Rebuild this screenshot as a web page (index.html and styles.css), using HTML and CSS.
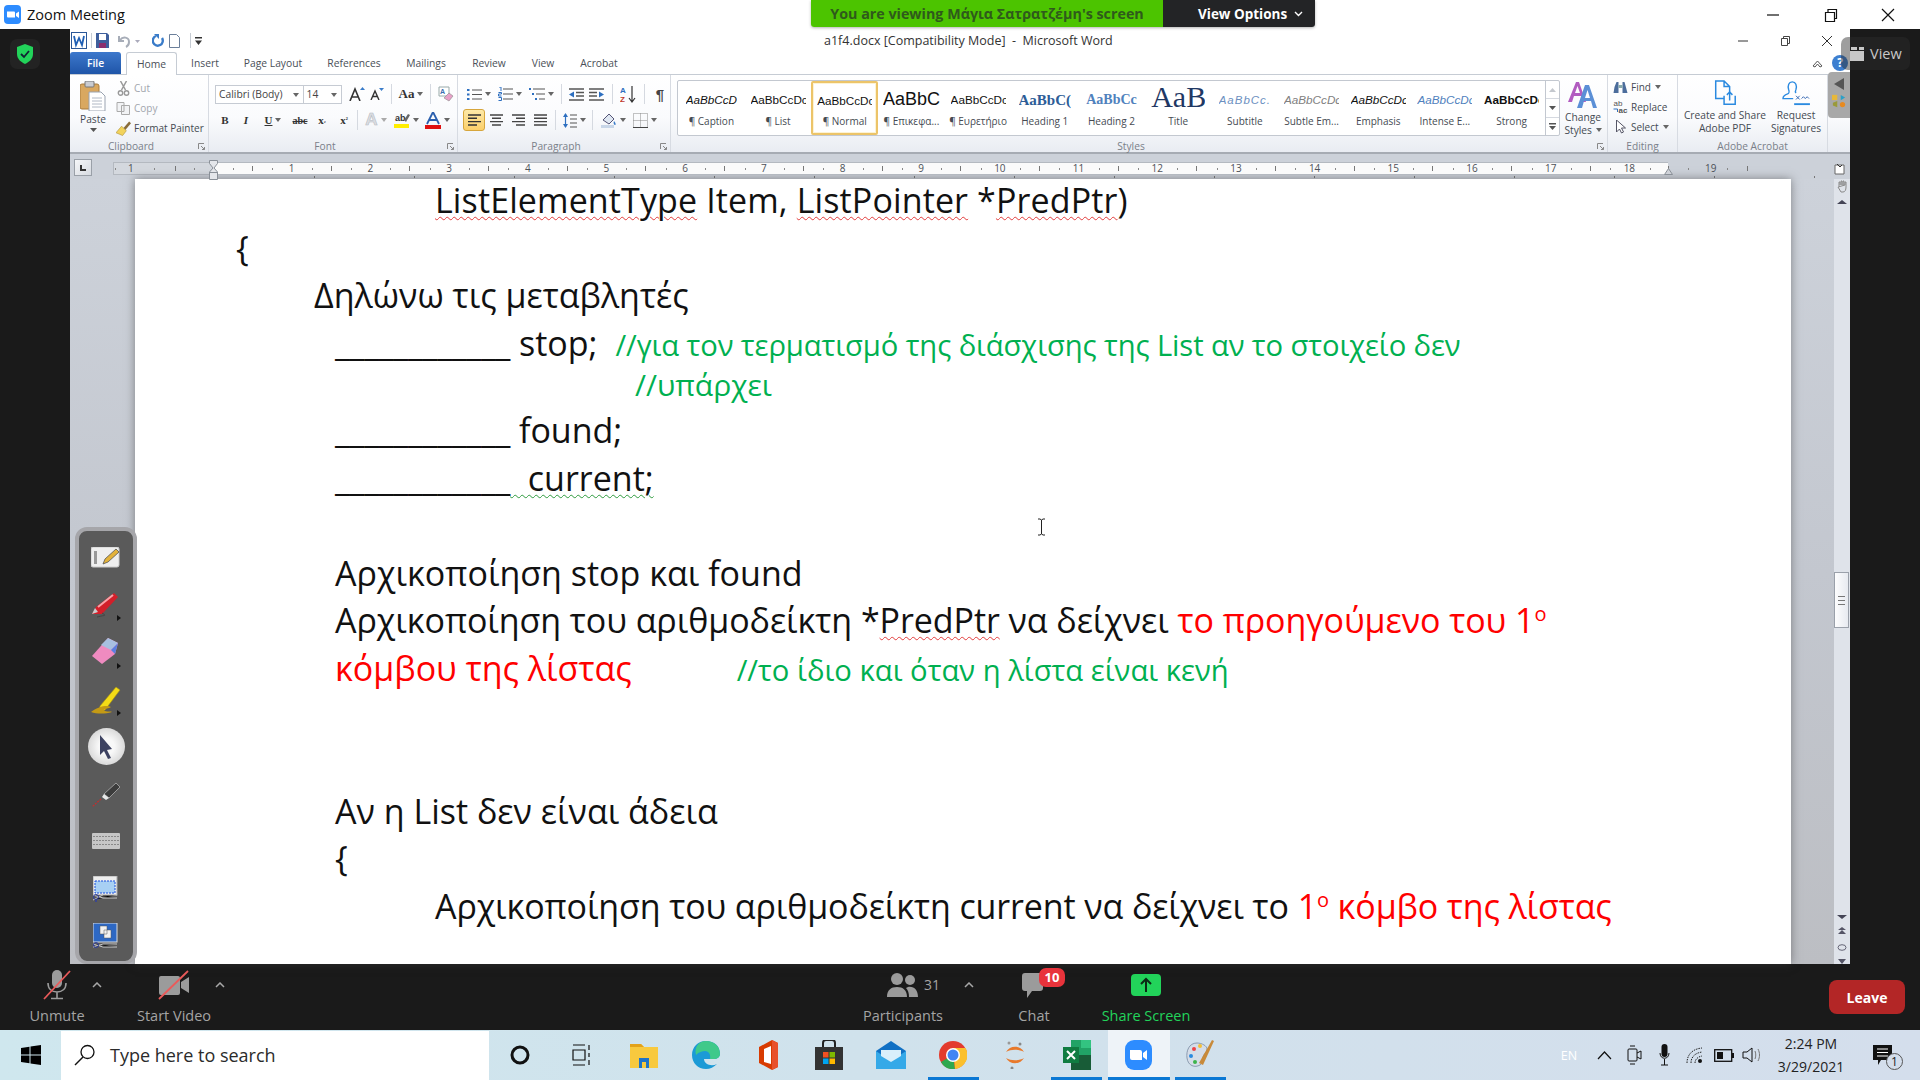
FILE: index.html
```html
<!DOCTYPE html>
<html lang="en">
<head>
  <meta charset="UTF-8">
  <title>Zoom Meeting</title>
  <link rel="stylesheet" href="styles.css">
</head>
<body>
  <header class="titlebar">
    <svg class="zoom-logo" width="17" height="19" viewBox="0 0 17 19"><rect width="17" height="19" rx="4" fill="#2d8cff"/><path d="M3 6.5h7a1 1 0 0 1 1 1v5H4a1 1 0 0 1-1-1zM12 8.5l3-2v6.500l-3-2z" fill="#fff"/></svg>
    <span class="titlebar-name">Zoom Meeting</span>
    <div class="banner">
      <span class="banner-msg">You are viewing Μάγια Σατρατζέμη's screen</span>
      <span class="banner-opt">View Options <svg width="9" height="6" viewBox="0 0 9 6"><path d="M1 1l3.500 3.500L8 1" fill="none" stroke="#fff" stroke-width="1.400"/></svg></span>
    </div>
    <div class="wincontrols">
      <svg width="58" height="16" viewBox="0 0 16 16"><path d="M3 8h12" stroke="#111" stroke-width="1.200"/></svg>
      <svg width="58" height="16" viewBox="0 0 16 16"><path d="M3.500 5.500h9v9h-9zM6 5.500V2.500h8.500v9h-2" fill="none" stroke="#111" stroke-width="1.200"/></svg>
      <svg width="58" height="16" viewBox="0 0 16 16"><path d="M2 2l12 12M14 2L2 14" stroke="#111" stroke-width="1.200"/></svg>
    </div>
  </header>

  <main class="stage">
    <aside class="side side-left">
      <div class="shield">
        <svg width="16" height="20" viewBox="0 0 16 20"><path d="M8 0l8 3v7c0 5-4 8-8 10-4-2-8-5-8-10V3z" fill="#22d35a"/><path d="M4 10l3 3 5-6" fill="none" stroke="#123" stroke-width="1.800"/></svg>
      </div>
    </aside>

    <section class="word">
      <div class="word-title">
        <div class="qat">
          <svg width="16" height="17" viewBox="0 0 16 17"><rect x=".5" y=".5" width="15" height="16" fill="#fff" stroke="#2b5797"/><path d="M3 4l2 9 3-7 3 7 2-9" fill="none" stroke="#1f5fb4" stroke-width="1.800"/></svg>
          <i class="qat-sep"></i>
          <svg width="13" height="15" viewBox="0 0 13 15"><path d="M0 0h11l2 2v13H0z" fill="#3f5f9c"/><rect x="3" y="1" width="7" height="6" fill="#fff"/><rect x="3" y="10" width="7" height="5" fill="#8c2f6e"/></svg>
          <svg class="qat-undo" width="24" height="14" viewBox="0 0 24 14"><path d="M2 2v5h5M3 6c3-4 9-3 9 2 0 2-1 4-3 5" fill="none" stroke="#a7adb8" stroke-width="2"/><path d="M18 6h5l-2.500 3z" fill="#aab"/></svg>
          <svg class="qat-repeat" width="13" height="14" viewBox="0 0 13 14"><path d="M4 2a5 5 0 1 0 6 2" fill="none" stroke="#3a7cc9" stroke-width="2.400"/><path d="M2 0h5v5z" fill="#3a7cc9"/></svg>
          <svg width="11" height="14" viewBox="0 0 11 14"><path d="M.5.500h7l3 3v10H.5z" fill="#fff" stroke="#6b7f9a"/></svg>
          <i class="qat-sep qat-sep-end"></i>
          <svg width="7" height="8" viewBox="0 0 7 8"><path d="M0 0h7v1.500H0zM0 3.500h7L3.500 8z" fill="#333"/></svg>
        </div>
        <span class="doc-title">a1f4.docx [Compatibility Mode] &nbsp;- &nbsp;Microsoft Word</span>
        <div class="word-controls">
          <svg width="42" height="12" viewBox="0 0 12 12"><path d="M1 6h10" stroke="#333"/></svg>
          <svg width="42" height="12" viewBox="0 0 12 12"><path d="M2.500 3.500h6v7h-6zM4.500 3.500v-2h6v7h-2" fill="none" stroke="#444"/></svg>
          <svg width="42" height="12" viewBox="0 0 12 12"><path d="M1 1l10 10M11 1L1 11" stroke="#333"/></svg>
        </div>
      </div>

      <nav class="tabs">
        <span class="tab tab-file">File</span>
        <span class="tab tab-home">Home</span>
        <span class="tab t56">Insert</span>
        <span class="tab t80">Page Layout</span>
        <span class="tab t82">References</span>
        <span class="tab t62">Mailings</span>
        <span class="tab t64">Review</span>
        <span class="tab t44">View</span>
        <span class="tab t68">Acrobat</span>
        <div class="tabs-help">
          <svg width="11" height="9" viewBox="0 0 11 9"><path d="M1 7l4.500-5L10 7 8 8 5.500 5 3 8z" fill="#fff" stroke="#555"/></svg>
          <svg width="16" height="16" viewBox="0 0 16 16"><circle cx="8" cy="8" r="8" fill="#3d7fd0"/><text x="8" y="12" class="help-mark">?</text></svg>
        </div>
      </nav>

      <div class="ribbon">
        <div class="group g-clipboard">
          <div class="group-body clip-body">
            <div class="paste">
              <svg width="26" height="30" viewBox="0 0 26 30"><rect y="3" width="19" height="25" rx="2" fill="#d9a860" stroke="#a87b3c"/><rect x="5" width="9" height="6" rx="1" fill="#c9ccd2" stroke="#777"/><path d="M9 11h12l4 4v15H9z" fill="#fff" stroke="#9aa3b0"/><path d="M12 17h10M12 20h10M12 23h10M12 26h10" stroke="#b0b8c4"/></svg>
              <span>Paste</span>
              <svg width="7" height="4" viewBox="0 0 7 4"><path d="M0 0h7L3.500 4z" fill="#555"/></svg>
            </div>
            <ul class="clip-list">
              <li class="muted"><svg width="12" height="15" viewBox="0 0 12 15"><path d="M3 0l5 9M9 0L4 9" stroke="#999" stroke-width="1.500"/><circle cx="3" cy="12" r="2.200" fill="none" stroke="#999" stroke-width="1.400"/><circle cx="9" cy="12" r="2.200" fill="none" stroke="#999" stroke-width="1.400"/></svg>Cut</li>
              <li class="muted"><svg width="14" height="13" viewBox="0 0 14 13"><path d="M.5.500h7v9h-7zM5 3.500h8v9H5z" fill="#f2f3f5" stroke="#aaa"/></svg>Copy</li>
              <li><svg width="16" height="15" viewBox="0 0 16 15"><path d="M8 7l6-7 2 2-6 7z" fill="#8a6d3b"/><path d="M0 12l6-7 5 5-4 5z" fill="#f2d35c" stroke="#a98a2a" stroke-width=".6"/></svg>Format Painter</li>
            </ul>
          </div>
          <div class="group-label has-launcher">Clipboard<svg class="launcher" width="7" height="7" viewBox="0 0 7 7"><path d="M.5 6V.5H6M3 3l3.500 3.500M4 6.500h2.500V4" fill="none" stroke="#888"/></svg></div>
        </div>

        <div class="group g-font">
          <div class="group-body font-body">
            <div class="tool-row">
              <span class="combo combo-font">Calibri (Body)<b class="caret"></b></span>
              <span class="combo combo-size">14<b class="caret"></b></span>
              <span class="tool w20 mg-l1"><svg width="16" height="14" viewBox="0 0 16 14"><path d="M1 14L6 2l5 12M3 10h6" fill="none" stroke="#333" stroke-width="1.600"/><path d="M11 3l2.500-3L16 3z" fill="#3a7cc9"/></svg></span>
              <span class="tool w20"><svg width="14" height="12" viewBox="0 0 14 12"><path d="M1 12l4-9 4 9M3 8.500h4" fill="none" stroke="#333" stroke-width="1.400"/><path d="M9 0h5l-2.500 3z" fill="#3a7cc9"/></svg></span>
              <i class="sep"></i>
              <span class="tool w30"><span class="aa">Aa</span><b class="caret"></b></span>
              <i class="sep"></i>
              <span class="tool w22"><svg width="16" height="16" viewBox="0 0 16 16"><path d="M1 1h10v9H1z" fill="#fff" stroke="#9aa"/><text x="2" y="8" class="mini-a">A</text><path d="M6 12l5-5 4 3-4 5z" fill="#e8a0c8" stroke="#888" stroke-width=".6"/></svg></span>
            </div>
            <div class="tool-row row-two">
              <span class="tool w20 fmt fmt-b">B</span>
              <span class="tool w22 fmt fmt-i">I</span>
              <span class="tool w32 fmt fmt-u"><u>U</u><b class="caret"></b></span>
              <span class="tool w22 fmt fmt-s"><s>abc</s></span>
              <span class="tool w22 fmt fmt-b">x<sub>₂</sub></span>
              <span class="tool w22 fmt fmt-b">x<sup>²</sup></span>
              <i class="sep sep-tight"></i>
              <span class="tool w30"><span class="fx-a">A</span><b class="caret caret-faint"></b></span>
              <span class="tool w30"><svg width="16" height="16" viewBox="0 0 16 16"><text x="1" y="9" class="mini-ab">ab</text><path d="M10 8l4-6 2 1-4 7z" fill="#666"/><rect y="12" width="15" height="4" fill="#ffee00"/></svg><b class="caret"></b></span>
              <span class="tool w32"><svg width="16" height="17" viewBox="0 0 16 17"><path d="M2 12L8 0l6 12M4.500 8h7" fill="none" stroke="#2a5fae" stroke-width="1.800"/><rect y="13" width="16" height="4" fill="#e01010"/></svg><b class="caret"></b></span>
            </div>
          </div>
          <div class="group-label has-launcher">Font<svg class="launcher" width="7" height="7" viewBox="0 0 7 7"><path d="M.5 6V.5H6M3 3l3.500 3.500M4 6.500h2.500V4" fill="none" stroke="#888"/></svg></div>
        </div>

        <div class="group g-para">
          <div class="group-body para-body">
            <div class="tool-row">
              <span class="tool w32"><svg width="15" height="13" viewBox="0 0 15 13"><path d="M5 2h10M5 6.500h10M5 11h10" stroke="#555" stroke-width="1.200"/><path d="M0 1h2.500v2H0zM0 5.500h2.500v2H0zM0 10h2.500v2H0z" fill="#2d6fc0"/></svg><b class="caret"></b></span>
              <span class="tool w30"><svg width="15" height="14" viewBox="0 0 15 14"><path d="M5 2h10M5 7h10M5 12h10" stroke="#555" stroke-width="1.200"/><path d="M1 0h2v4M.5 5.500h3v1.500h-3v2h3M.5 10.500h3v3h-3" fill="none" stroke="#2d6fc0"/></svg><b class="caret"></b></span>
              <span class="tool w32"><svg width="16" height="14" viewBox="0 0 16 14"><path d="M4 2h12M7 7h9M10 12h6" stroke="#555" stroke-width="1.200"/><path d="M0 1h2v2H0zM3 6h2v2H3zM6 11h2v2H6z" fill="#2d6fc0"/></svg><b class="caret"></b></span>
              <i class="sep"></i>
              <span class="tool w20"><svg width="15" height="13" viewBox="0 0 15 13"><path d="M0 1h15M7 4.500h8M7 8h8M0 12h15" stroke="#555" stroke-width="1.300"/><path d="M5 3.500v6L0 6.500z" fill="#2d6fc0"/></svg></span>
              <span class="tool w20"><svg width="15" height="13" viewBox="0 0 15 13"><path d="M0 1h15M0 4.500h8M0 8h8M0 12h15" stroke="#555" stroke-width="1.300"/><path d="M10 3.500v6l5-3z" fill="#2d6fc0"/></svg></span>
              <i class="sep sep-wide"></i>
              <span class="tool w20"><svg width="16" height="17" viewBox="0 0 16 17"><text x="0" y="7" class="mini-az">A</text><text x="0" y="16" class="mini-za">Z</text><path d="M12 0v15M9 12l3 4 3-4" fill="none" stroke="#333" stroke-width="1.200"/></svg></span>
              <i class="sep sep-wide"></i>
              <span class="tool w20 pilcrow">¶</span>
            </div>
            <div class="tool-row row-two">
              <span class="tool w22 tool-on"><svg width="13" height="12" viewBox="0 0 13 12"><path d="M0 1h13M0 4.300h9M0 7.600h13M0 11h9" stroke="#333" stroke-width="1.400"/></svg></span>
              <span class="tool w22"><svg width="13" height="12" viewBox="0 0 13 12"><path d="M0 1h13M2 4.300h9M0 7.600h13M2 11h9" stroke="#444" stroke-width="1.400"/></svg></span>
              <span class="tool w22"><svg width="13" height="12" viewBox="0 0 13 12"><path d="M0 1h13M4 4.300h9M0 7.600h13M4 11h9" stroke="#444" stroke-width="1.400"/></svg></span>
              <span class="tool w22"><svg width="13" height="12" viewBox="0 0 13 12"><path d="M0 1h13M0 4.300h13M0 7.600h13M0 11h13" stroke="#444" stroke-width="1.400"/></svg></span>
              <i class="sep"></i>
              <span class="tool w28"><svg width="14" height="15" viewBox="0 0 14 15"><path d="M7 2h7M7 6h7M7 10h7M7 14h7" stroke="#555" stroke-width="1.200"/><path d="M2.500 1v13" stroke="#2d6fc0" stroke-width="1.200"/><path d="M0 4l2.500-4L5 4zM0 11l2.500 4L5 11z" fill="#2d6fc0"/></svg><b class="caret"></b></span>
              <i class="sep"></i>
              <span class="tool w32"><svg width="16" height="16" viewBox="0 0 16 16"><path d="M2 8l6-6 5 5-5 5z" fill="#dfe7f2" stroke="#557"/><path d="M13 9c2 2 2 4 1 4s-2-2-1-4z" fill="#3a7cc9"/><rect y="13" width="13" height="3" fill="#c8d6e8"/></svg><b class="caret"></b></span>
              <span class="tool w32"><svg width="15" height="15" viewBox="0 0 15 15"><path d="M.5.500h14v14H.5zM7.500.5v14M.5 7.500h14" fill="none" stroke="#888" stroke-dasharray="1 1"/><path d="M0 14.500h15" stroke="#444"/></svg><b class="caret"></b></span>
            </div>
          </div>
          <div class="group-label has-launcher">Paragraph<svg class="launcher" width="7" height="7" viewBox="0 0 7 7"><path d="M.5 6V.5H6M3 3l3.500 3.500M4 6.500h2.500V4" fill="none" stroke="#888"/></svg></div>
        </div>

        <div class="group g-styles">
          <div class="group-body styles-body">
            <div class="gallery">
              <div class="style-list">
                <div class="style-item"><span class="sample s-ital">AaBbCcD</span><span class="style-name">¶ Caption</span></div>
                <div class="style-item"><span class="sample">AaBbCcDc</span><span class="style-name">¶ List</span></div>
                <div class="style-item style-on"><span class="sample">AaBbCcDc</span><span class="style-name">¶ Normal</span></div>
                <div class="style-item"><span class="sample s-big">AaBbC</span><span class="style-name">¶ Επικεφα...</span></div>
                <div class="style-item"><span class="sample">AaBbCcDc</span><span class="style-name">¶ Ευρετήριο</span></div>
                <div class="style-item"><span class="sample s-h1">AaBbC(</span><span class="style-name">Heading 1</span></div>
                <div class="style-item"><span class="sample s-h2">AaBbCc</span><span class="style-name">Heading 2</span></div>
                <div class="style-item"><span class="sample s-title">AaB</span><span class="style-name">Title</span></div>
                <div class="style-item"><span class="sample s-sub">AaBbCc.</span><span class="style-name">Subtitle</span></div>
                <div class="style-item"><span class="sample s-subtle">AaBbCcDc</span><span class="style-name">Subtle Em...</span></div>
                <div class="style-item"><span class="sample s-ital">AaBbCcDc</span><span class="style-name">Emphasis</span></div>
                <div class="style-item"><span class="sample s-intense">AaBbCcDc</span><span class="style-name">Intense E...</span></div>
                <div class="style-item"><span class="sample s-strong">AaBbCcDc</span><span class="style-name">Strong</span></div>
              </div>
              <div class="gallery-arrows">
                <span><svg width="7" height="4" viewBox="0 0 7 4"><path d="M0 4h7L3.500 0z" fill="#c4c8ce"/></svg></span>
                <span><svg width="7" height="4" viewBox="0 0 7 4"><path d="M0 0h7L3.500 4z" fill="#555"/></svg></span>
                <span><svg width="7" height="7" viewBox="0 0 7 7"><path d="M0 0h7v1.500H0zM0 3h7L3.500 7z" fill="#555"/></svg></span>
              </div>
            </div>
            <div class="big-tool change-styles">
              <svg width="30" height="28" viewBox="0 0 30 28"><path d="M0 22L8 2h3l7 20h-3l-2-6H6l-2 6zM7 13h5L9.500 6z" fill="#b25cc0"/><path d="M9 28L17 5h4l8 23h-4l-2-7h-7l-2 7zM17 18h5l-2.500-8z" fill="#5b8fd6"/></svg>
              <span>Change</span>
              <span>Styles <b class="caret caret-inline"></b></span>
            </div>
          </div>
          <div class="group-label has-launcher">Styles<svg class="launcher" width="7" height="7" viewBox="0 0 7 7"><path d="M.5 6V.5H6M3 3l3.500 3.500M4 6.500h2.500V4" fill="none" stroke="#888"/></svg></div>
        </div>

        <div class="group g-edit">
          <div class="group-body">
            <ul class="clip-list edit-list">
              <li><svg width="14" height="13" viewBox="0 0 14 13"><path d="M1 6l2-5h2v11H0zM9 1h2l3 11H9z" fill="#4c6d9c"/><rect x="5" y="4" width="4" height="3" fill="#8aa"/></svg>Find <b class="caret caret-inline"></b></li>
              <li><svg width="14" height="14" viewBox="0 0 14 14"><text x="0" y="6" class="mini-rp">ab</text><text x="5" y="13" class="mini-rp mini-rp2">ac</text><path d="M0 9h4v3" fill="none" stroke="#2d6fc0"/></svg>Replace</li>
              <li><svg width="14" height="14" viewBox="0 0 14 14"><path d="M3 0v12l3-3 2 4 2-1-2-4h4z" fill="#fff" stroke="#556"/></svg>Select <b class="caret caret-inline"></b></li>
            </ul>
          </div>
          <div class="group-label">Editing</div>
        </div>

        <div class="group g-acrobat">
          <div class="group-body acrobat-body">
            <div class="big-tool acro-tool">
              <svg width="24" height="26" viewBox="0 0 24 28"><path d="M11 20H2V1h9l6 6v6M11 1v6h6" fill="none" stroke="#2a8ae0" stroke-width="1.600"/><path d="M11 17v9h12v-9M17 22v-9M14 16l3-3 3 3" fill="none" stroke="#2a8ae0" stroke-width="1.600"/></svg>
              <span>Create and Share</span>
              <span>Adobe PDF</span>
            </div>
            <div class="big-tool acro-tool">
              <svg width="30" height="26" viewBox="0 0 30 28"><path d="M11 2c-4 0-5 4-4 8 1 3 1 4-1 5-3 1-5 3-5 5h11M11 2c4 0 5 4 4 8-1 2-1 3 0 4" fill="none" stroke="#2a8ae0" stroke-width="1.500"/><path d="M15 17l4 4M19 17l-4 4M21 20l2-2 2 2 2-2 2 2" fill="none" stroke="#2a5fae"/><path d="M13 26h17" stroke="#2a8ae0" stroke-width="2"/></svg>
              <span>Request</span>
              <span>Signatures</span>
            </div>
          </div>
          <div class="group-label">Adobe Acrobat</div>
        </div>

        <div class="ext-slot">
          <div class="ext-tab">
            <svg width="10" height="12" viewBox="0 0 10 12"><path d="M10 0v12L0 6z" fill="#555"/></svg>
            <svg width="16" height="14" viewBox="0 0 16 16"><rect y="1" width="6" height="6" fill="#e8b83a"/><path d="M10 1l5 3-5 3z" fill="#2aa0c8"/><path d="M1 10l5-2v7l-5-2z" fill="#9a9a3a"/><circle cx="12" cy="12" r="3" fill="#e88a20"/></svg>
          </div>
        </div>
      </div>

      <div class="ruler">
        <div class="ruler-corner"><span></span></div>
        <div class="ruler-strip">
          <div class="ruler-margin"><span>1</span></div>
          <div class="ruler-body">
            <svg class="indent-mark" width="9" height="20" viewBox="0 0 9 20"><path d="M.5.500h8v3L5 8l3.500 4v7.500h-8V12L4 8 .5 3.500z" fill="#e4e6ea" stroke="#8a9098"/><path d="M.5 12.500h8" stroke="#8a9098"/></svg>
            <svg class="right-mark" width="9" height="7" viewBox="0 0 9 7"><path d="M.5 6.500L4.500.5l4 6z" fill="#cfd2d8" stroke="#8a9098"/></svg>
            <span>1</span><span>2</span><span>3</span><span>4</span><span>5</span><span>6</span><span>7</span><span>8</span><span>9</span><span>10</span><span>11</span><span>12</span><span>13</span><span>14</span><span>15</span><span>16</span><span>17</span><span>18</span>
          </div>
          <div class="ruler-tail"><span>19</span></div>
        </div>
        <div class="ruler-view"><svg width="14" height="13" viewBox="0 0 14 13"><path d="M1 2h9v9H1z" fill="#fff" stroke="#666"/><path d="M3 1l3 3 2-2" fill="none" stroke="#333"/></svg></div>
      </div>

      <div class="docarea">
        <div class="gutter"></div>
        <article class="page">
          <p class="line ind-3 line-first loose"><span class="sq">ListElementType</span> Item, <span class="sq">ListPointer</span> *<span class="sq">PredPtr</span>)</p>
          <p class="line ind-0">{</p>
          <p class="line ind-1">Δηλώνω τις μεταβλητές</p>
          <p class="line ind-2"><span class="blank">____________</span> stop;<span class="note note-a">//για τον τερματισμό της διάσχισης της List αν το στοιχείο δεν</span></p>
          <p class="line line-short ind-4"><span class="note note-c">//υπάρχει</span></p>
          <p class="line ind-2"><span class="blank">____________</span> found;</p>
          <p class="line ind-2"><span class="blank">____________</span><span class="gsq">  current;</span></p>
          <p class="line"></p>
          <p class="line ind-2">Αρχικοποίηση stop και found</p>
          <p class="line ind-2 tight"><span>Αρχικοποίηση του αριθμοδείκτη *</span><span class="sq">PredPtr</span> να δείχνει <span class="red">το προηγούμενο του 1<sup class="ord">ο</sup></span></p>
          <p class="line ind-2"><span class="red">κόμβου της λίστας</span><span class="note note-b">//το ίδιο και όταν η λίστα είναι κενή</span></p>
          <p class="line"></p>
          <p class="line"></p>
          <p class="line ind-2">Αν η List δεν είναι άδεια</p>
          <p class="line ind-2">{</p>
          <p class="line ind-3 tighter">Αρχικοποίηση του αριθμοδείκτη current να δείχνει το <span class="red">1<sup class="ord">ο</sup> κόμβο της λίστας</span></p>
        </article>
        <div class="gutter gutter-right"></div>
        <div class="vscroll">
          <svg width="13" height="14" viewBox="0 0 13 14"><path d="M3 7V3h1v3M5 6V2h1v4M7 6V2h1v4M9 6V3h1v5c0 3-1 5-3 5H5L2 8z" fill="none" stroke="#888"/></svg>
          <svg class="vs-up" width="10" height="4" viewBox="0 0 10 4"><path d="M0 4h10L5 0z" fill="#445"/></svg>
          <div class="vs-track"><div class="vs-thumb"><i></i></div></div>
          <svg width="10" height="4" viewBox="0 0 10 4"><path d="M0 0h10L5 4z" fill="#445"/></svg>
          <svg class="vs-prev" width="8" height="7" viewBox="0 0 8 7"><path d="M0 7h8L4 3zM0 3h8L4 0z" fill="#556"/></svg>
          <svg class="vs-oval" width="10" height="7" viewBox="0 0 10 7"><ellipse cx="5" cy="3.500" rx="4" ry="2.800" fill="none" stroke="#667"/></svg>
          <svg class="vs-next" width="8" height="5" viewBox="0 0 8 5"><path d="M0 0h8L4 5z" fill="#556"/></svg>
        </div>
      </div>
    </section>

    <aside class="side"></aside>

    <div class="view-btn">
      <svg width="14" height="14" viewBox="6 0 14 14"><path d="M0 4h20v10H0zM0 0h5v3H0zM7 0h6v3H7zM15 0h5v3h-5z" fill="#c8c8c8"/></svg>
      <span>View</span>
    </div>

    <div class="annotate">
      <span class="annot-slot"><svg width="30" height="22" viewBox="0 0 30 22"><rect width="28" height="20" rx="2" fill="#efefef" stroke="#ccc"/><rect x="3" y="4" width="3" height="13" fill="#999"/><path d="M12 17l2-5 11-10 3 3-11 10z" fill="#e3b23a" stroke="#555" stroke-width=".8"/></svg></span>
      <span class="annot-slot has-tri"><svg width="30" height="28" viewBox="0 0 30 28"><path d="M1 23l4-7 18-14 4 4-16 17z" fill="#d31f2a"/><path d="M7 16l15-12" stroke="#f6a3a8" stroke-width="2"/><path d="M1 23l6-2-3-4z" fill="#ccc"/><path d="M6 26c8-2 10-1 5-4" fill="none" stroke="#444"/></svg></span>
      <span class="annot-slot has-tri"><svg width="30" height="30" viewBox="0 0 30 30"><path d="M1 19L17 1l10 5-3 11-13 10z" fill="#ef8bc0"/><path d="M17 1l10 5-7 7-10-5z" fill="#a8c0e0"/><path d="M20 13l7-7-3 11z" fill="#5a7fe0"/></svg></span>
      <span class="annot-slot has-tri"><svg width="32" height="30" viewBox="0 0 32 30"><path d="M10 21l16-19 4 3-15 20-6 1z" fill="#f4dc16" stroke="#a58e10" stroke-width=".6"/><path d="M1 27c8-6 16-7 20-5-3 2-10 2-6 4 3 1 6 0 7 1-7 2-15 2-21 0z" fill="#c49a14"/></svg></span>
      <span class="annot-slot"><span class="annot-pointer"><svg width="16" height="24" viewBox="0 0 16 24"><path d="M2 0l12 14-5 1 4 8-3 1-4-8-4 4z" fill="#3d4261"/></svg></span></span>
      <span class="annot-slot"><svg width="30" height="28" viewBox="0 0 30 28"><path d="M13 14l12-11 4 4-11 11z" fill="#3c3c3c" stroke="#bbb" stroke-width=".7"/><path d="M13 14l5 4-3 2-4-3z" fill="#e8e8e8"/><path d="M10 19L1 27" stroke="#c03030" stroke-width="1.200" stroke-dasharray="2 1"/></svg></span>
      <span class="annot-slot"><svg width="28" height="16" viewBox="0 0 28 16"><rect width="28" height="16" rx="1" fill="#c6c6c6"/><path d="M1 3.500h26M1 7.500h26M1 11.500h26" stroke="#888" stroke-dasharray="2 1"/></svg></span>
      <span class="annot-slot"><svg width="26" height="26" viewBox="0 0 26 26"><rect width="24" height="19" fill="#eee" stroke="#aaa"/><rect x="2" y="5" width="20" height="12" fill="#a8d0f4" stroke="#1b4fdc" stroke-dasharray="2 1"/><path d="M0 24l10-5h14M0 19l10 3h14" stroke="#ccc"/><circle cx="3" cy="21" r="2.500" fill="none" stroke="#3040a0"/><circle cx="3" cy="25" r="1" fill="#3040a0"/></svg></span>
      <span class="annot-slot"><svg width="26" height="26" viewBox="0 0 26 26"><rect width="24" height="19" fill="#2d68c4" stroke="#ddd"/><path d="M7 3h7v8H7zM11 7h7v8h-7z" fill="#f2f2f2" stroke="#555" stroke-width=".5"/><path d="M0 24l10-3h14M0 21l10 3h14" stroke="#ccc"/><circle cx="3" cy="22" r="2.500" fill="none" stroke="#3040a0"/></svg></span>
    </div>

    <svg class="ibeam" width="9" height="18" viewBox="0 0 9 18"><path d="M1 1h2l1.500 1L6 1h2M4.500 2v14M1 17h2l1.500-1L6 17h2" fill="none" stroke="#222"/></svg>
  </main>

  <footer class="meeting-bar">
    <div class="mb-item mb-unmute">
      <div class="mb-icon">
        <svg width="30" height="30" viewBox="0 0 30 30"><rect x="10" y="0" width="10" height="18" rx="5" fill="#9b9b9b"/><path d="M6 13c0 6 4 9 9 9s9-3 9-9M15 22v6M9 28.500h12" fill="none" stroke="#9b9b9b" stroke-width="1.600"/><path d="M2 29L28 1" stroke="#ea5a5a" stroke-width="1.800"/></svg>
        <svg class="chev" width="10" height="6" viewBox="0 0 10 6"><path d="M1 5l4-4 4 4" fill="none" stroke="#a8a8a8" stroke-width="1.500"/></svg>
      </div>
      <span>Unmute</span>
    </div>
    <div class="mb-item mb-video">
      <div class="mb-icon">
        <svg width="32" height="30" viewBox="0 0 32 30"><path d="M3 6h17a2 2 0 0 1 2 2v15a2 2 0 0 1-2 2H3a2 2 0 0 1-2-2V8a2 2 0 0 1 2-2zM23 12l8-5v16l-8-5z" fill="#9b9b9b"/><path d="M1 29L30 1" stroke="#ea5a5a" stroke-width="1.800"/></svg>
        <svg class="chev" width="10" height="6" viewBox="0 0 10 6"><path d="M1 5l4-4 4 4" fill="none" stroke="#a8a8a8" stroke-width="1.500"/></svg>
      </div>
      <span>Start Video</span>
    </div>
    <div class="mb-item mb-people">
      <div class="mb-icon">
        <svg width="32" height="24" viewBox="0 0 32 24"><circle cx="10" cy="6" r="6" fill="#9b9b9b"/><circle cx="23" cy="7" r="5" fill="#9b9b9b"/><path d="M0 24c0-7 4-10 10-10s10 3 10 10zM21 14c6-1 10 3 10 10h-9c0-4-1-7-3-9z" fill="#9b9b9b"/></svg>
        <span class="count">31</span>
        <svg class="chev" width="10" height="6" viewBox="0 0 10 6"><path d="M1 5l4-4 4 4" fill="none" stroke="#a8a8a8" stroke-width="1.500"/></svg>
      </div>
      <span>Participants</span>
    </div>
    <div class="mb-item mb-chat">
      <div class="mb-icon">
        <svg width="26" height="28" viewBox="0 0 26 28"><path d="M4 2h15a3 3 0 0 1 3 3v12a3 3 0 0 1-3 3h-8l-5 7v-7H4a3 3 0 0 1-3-3V5a3 3 0 0 1 3-3z" fill="#9b9b9b"/></svg>
        <b class="badge">10</b>
      </div>
      <span>Chat</span>
    </div>
    <div class="mb-item mb-share">
      <div class="mb-icon">
        <svg width="30" height="22" viewBox="0 0 30 22"><rect width="30" height="22" rx="4" fill="#22d35a"/><path d="M15 18V6M10 10l5-5 5 5" fill="none" stroke="#0b2a14" stroke-width="2"/></svg>
      </div>
      <span>Share Screen</span>
    </div>
    <button class="leave">Leave</button>
  </footer>

  <footer class="taskbar">
    <div class="start"><svg width="20" height="20" viewBox="0 0 20 20"><path d="M0 3l8.500-1.300v7.800H0zM9.500 1.500L20 0v9.500H9.500zM0 10.500h8.500v7.800L0 17zM9.500 10.500H20V20L9.500 18.500z" fill="#000"/></svg></div>
    <div class="search">
      <svg width="22" height="22" viewBox="0 0 22 22"><circle cx="13.500" cy="8" r="6.500" fill="none" stroke="#111" stroke-width="1.300"/><path d="M9 13l-8 8" stroke="#111" stroke-width="1.500"/></svg>
      <span>Type here to search</span>
    </div>
    <div class="task-icons">
      <span class="task"><svg width="20" height="20" viewBox="0 0 20 20"><circle cx="10" cy="10" r="8" fill="none" stroke="#111" stroke-width="3"/></svg></span>
      <span class="task"><svg width="20" height="22" viewBox="0 0 20 22"><path d="M1 1h12M1 21h12M1 6h12v10H1zM17 1v5M17 9v4M17 16v5" fill="none" stroke="#111" stroke-width="1.200"/></svg></span>
      <span class="task"><svg width="28" height="26" viewBox="0 0 28 26"><path d="M0 2h11l3 3h14v21H0z" fill="#f8c93e"/><path d="M0 2h11l3 3H0z" fill="#e3a21a"/><path d="M9 26v-10h10v10h-3v-6h-4v6z" fill="#1f74c8"/></svg></span>
      <span class="task"><svg width="28" height="28" viewBox="0 0 28 28"><path d="M14 0c8 0 14 5 14 13 0 3-3 5-6 5H12c0 5 7 8 13 5-3 3-7 5-11 5C6 28 0 22 0 14S6 0 14 0z" fill="#1c9ad6"/><path d="M14 0c8 0 14 5 14 13 0 3-3 5-6 5h-4c1-4-1-8-5-8-3 0-6 1-9 4C2 6 7 0 14 0z" fill="#3fc98a"/></svg></span>
      <span class="task"><svg width="22" height="30" viewBox="0 0 22 30"><path d="M2 7L15 0l6 3v24l-6 3L2 23z" fill="#d83b01"/><path d="M7 9l7-3v18l-7-2z" fill="#fff"/><path d="M15 0l6 3v24l-6 3z" fill="#e8502a"/></svg></span>
      <span class="task"><svg width="28" height="30" viewBox="0 0 28 30"><path d="M8 8V3a3 3 0 0 1 3-3h6a3 3 0 0 1 3 3v5" fill="none" stroke="#222" stroke-width="2"/><rect y="7" width="28" height="23" fill="#333"/><rect x="8" y="12" width="5.500" height="5.500" fill="#f25022"/><rect x="14.500" y="12" width="5.500" height="5.500" fill="#7fba00"/><rect x="8" y="18.500" width="5.500" height="5.500" fill="#00a4ef"/><rect x="14.500" y="18.500" width="5.500" height="5.500" fill="#ffb900"/></svg></span>
      <span class="task"><svg width="30" height="28" viewBox="0 0 30 28"><path d="M0 10L15 0l15 10v18H0z" fill="#1170c4"/><path d="M0 10l15 10 15-10v18H0z" fill="#35a9e8"/><path d="M5 9h20v6l-10 6-10-6z" fill="#d9effb"/></svg></span>
      <span class="task task-on"><svg width="28" height="28" viewBox="0 0 28 28"><circle cx="14" cy="14" r="14" fill="#e33b2e"/><path d="M14 14L2 21a14 14 0 0 0 14 7z" fill="#2fa84f"/><path d="M14 7h12.500A14 14 0 0 1 16 28z" fill="#fbc02d"/><circle cx="14" cy="14" r="7" fill="#fff"/><circle cx="14" cy="14" r="5.500" fill="#4285f4"/></svg></span>
      <span class="task"><svg width="22" height="28" viewBox="0 0 22 28"><path d="M2 11c4-7 14-7 18 0-5-3-13-3-18 0zM2 17c4 7 14 7 18 0-5 3-13 3-18 0z" fill="#e8792b"/><circle cx="5" cy="2" r="1.500" fill="#999"/><circle cx="16" cy="3" r="1.500" fill="#888"/><circle cx="8" cy="27" r="1.500" fill="#888"/></svg></span>
      <span class="task task-on"><svg width="28" height="30" viewBox="0 0 28 30"><path d="M8 0h20v30H8z" fill="#21a366"/><path d="M18 0h10v8H18z" fill="#33c481"/><path d="M8 15h20v15H8z" fill="#185c37"/><rect y="7" width="16" height="16" fill="#107c41"/><path d="M4 11l8 8M12 11l-8 8" stroke="#fff" stroke-width="2"/></svg></span>
      <span class="task task-active"><svg width="27" height="30" viewBox="0 0 27 30"><rect width="27" height="30" rx="9" fill="#2d8cff"/><path d="M5 10h10a2 2 0 0 1 2 2v8H7a2 2 0 0 1-2-2zM18 13l4-3v10l-4-3z" fill="#fff"/></svg></span>
      <span class="task task-on"><svg width="30" height="32" viewBox="0 0 30 32"><path d="M11 4C3 4 0 12 1 19c1 8 8 10 13 7 3-2 2-5 3-8 1-4 4-4 4-8 0-3-5-6-10-6z" fill="#d5dde8" stroke="#8a9bb0"/><circle cx="8" cy="10" r="2" fill="#e44"/><circle cx="5" cy="17" r="2" fill="#2a8ae0"/><circle cx="9" cy="23" r="2" fill="#3cb44b"/><circle cx="14" cy="7" r="2" fill="#f2c038"/><path d="M13 24L26 1l2 1-11 24z" fill="#c88a3a"/></svg></span>
    </div>
    <div class="tray">
      <span class="tray-en">EN</span>
      <span class="tray-ic"><svg width="15" height="9" viewBox="0 0 15 9"><path d="M1 8l6.500-7L14 8" fill="none" stroke="#111" stroke-width="1.200"/></svg></span>
      <span class="tray-ic"><svg width="15" height="20" viewBox="0 0 15 20"><rect x="1" y="4" width="9" height="12" rx="1" fill="none" stroke="#111"/><path d="M10 8l4-2v8l-4-2M3 1h5M3 19h5" fill="none" stroke="#111"/></svg></span>
      <span class="tray-ic"><svg width="11" height="22" viewBox="0 0 11 22"><rect x="2.500" width="6" height="13" rx="3" fill="#111"/><path d="M1 9c0 7 9 7 9 0M5.500 15v6M2 21h7" fill="none" stroke="#111"/></svg></span>
      <span class="tray-ic"><svg width="17" height="17" viewBox="0 0 17 17"><path d="M1 16C1 8 6 2 16 1M5 16c0-6 4-10 11-11M9 16c0-3 2-6 7-7" fill="none" stroke="#222" stroke-dasharray="1.500 1"/><circle cx="14" cy="14" r="2" fill="#111"/></svg></span>
      <span class="tray-ic"><svg width="20" height="13" viewBox="0 0 20 13"><rect x=".7" y=".7" width="17" height="11.600" fill="none" stroke="#111" stroke-width="1.300"/><rect x="3" y="3" width="6" height="7" fill="#111"/><rect x="18" y="4" width="2" height="5" fill="#111"/></svg></span>
      <span class="tray-ic tray-vol"><svg width="20" height="18" viewBox="0 0 20 18"><path d="M1 6h4l5-4v14l-5-4H1z" fill="none" stroke="#111"/><path d="M13 5c1 3 1 5 0 8M16 3c2 4 2 8 0 12" fill="none" stroke="#777"/></svg></span>
      <div class="clock"><span>2:24 PM</span><span>3/29/2021</span></div>
      <span class="notify">
        <svg width="19" height="20" viewBox="0 0 19 20"><path d="M0 0h19v15H8l-3 5v-5H0z" fill="#111"/><path d="M4 4h11M4 7.500h11M4 11h11" stroke="#fff"/></svg>
        <b>1</b>
      </span>
    </div>
  </footer>
</body>
</html>
```

FILE: styles.css
```css
html, body {
  height: 100%;
  margin: 0;
}
body {
  width: 1920px;
  height: 1080px;
  overflow: hidden;
  display: flex;
  flex-direction: column;
  font-family: "Open Sans", sans-serif;
  background: #1a1a1a;
}
ul { list-style: none; margin: 0; padding: 0; }
p { margin: 0; }
svg { display: block; flex: none; }

/* zoom title bar */
.titlebar {
  height: 29px;
  flex: none;
  background: #fff;
  display: flex;
  align-items: center;
  position: relative;
  padding-left: 4px;
}
.titlebar-name { margin-left: 6px; font-size: 14.5px; color: #111; }
.banner {
  position: absolute;
  left: 811px;
  top: 0;
  width: 504px;
  height: 27px;
  display: flex;
  z-index: 5;
  border-radius: 0 0 3px 3px;
  overflow: hidden;
  box-shadow: 0 1px 3px rgba(0,0,0,.3);
  font-size: 14.300px;
  font-weight: 700;
}
.banner-msg {
  width: 352px;
  background: #4cc400;
  color: #2f5a1c;
  text-align: center;
  line-height: 27px;
}
.banner-opt {
  flex: 1;
  background: #232426;
  color: #fff;
  display: flex;
  align-items: center;
  gap: 7px;
  padding-left: 35px;
  font-size: 13.500px;
}
.wincontrols { margin-left: auto; display: flex; margin-right: 3px; }

/* middle */
.stage {
  height: 935px;
  flex: none;
  display: flex;
  position: relative;
}
.side { width: 70px; flex: none; background: #1a1a1a; }
.shield {
  width: 30px;
  height: 30px;
  margin: 10px 0 0 10px;
  border-radius: 7px;
  background: #232323;
  display: flex;
  align-items: center;
  justify-content: center;
}
.word {
  flex: 1;
  display: flex;
  flex-direction: column;
  min-width: 0;
  background: #fff;
}
.word-title {
  height: 23px;
  display: flex;
  align-items: center;
  flex: none;
}
.qat {
  width: 754px;
  display: flex;
  align-items: center;
  gap: 4px;
  padding-left: 1px;
  box-sizing: border-box;
}
.qat-sep { width: 1px; height: 15px; background: #c6ccd4; }
.qat-sep-end { margin-left: 6px; }
.qat-undo { margin-left: 4px; }
.qat-repeat { margin-left: 7px; }
.doc-title { font-size: 12.500px; color: #333; }
.word-controls { margin-left: auto; display: flex; margin-right: 2px; }

.tabs {
  height: 22px;
  flex: none;
  display: flex;
  align-items: flex-end;
  border-bottom: 1px solid #c6ccd4;
  font-size: 10.300px;
  color: #4a4f57;
}
.tab { height: 22px; line-height: 22px; text-align: center; box-sizing: border-box; }
.tab-file {
  width: 51px;
  margin-right: 5px;
  border-radius: 3px 3px 0 0;
  background: linear-gradient(#3d78cc, #1f55a8);
  color: #fff;
  font-weight: 600;
}
.tab-home {
  width: 51px;
  background: #fff;
  border: 1px solid #c6ccd4;
  border-bottom: 0;
  border-radius: 3px 3px 0 0;
  height: 23px;
  margin-bottom: -1px;
}
.t56 { width: 56px; }
.t80 { width: 80px; }
.t82 { width: 82px; }
.t62 { width: 62px; }
.t64 { width: 64px; }
.t44 { width: 44px; }
.t68 { width: 68px; }
.tabs-help {
  margin-left: auto;
  display: flex;
  align-items: center;
  gap: 9px;
  height: 22px;
  margin-right: 2px;
}
.help-mark { font: 700 12px "Open Sans", sans-serif; fill: #fff; text-anchor: middle; }

.ribbon {
  height: 79px;
  flex: none;
  display: flex;
  background: linear-gradient(#fff, #fafbfd 55%, #e9ecf2);
  border-bottom: 2px solid #a6abb3;
  box-sizing: border-box;
  color: #444a52;
  font-size: 10.200px;
}
.group {
  flex: none;
  display: flex;
  flex-direction: column;
  border-right: 1px solid #d7dbe2;
  box-sizing: border-box;
}
.g-clipboard { width: 139px; }
.g-font { width: 249px; }
.g-para { width: 213px; }
.g-styles { width: 937px; }
.g-edit { width: 70px; }
.g-acrobat { width: 150px; }
.group-body { height: 64px; display: flex; }
.group-label {
  height: 13px;
  line-height: 15px;
  text-align: center;
  color: #7a8089;
  position: relative;
  font-size: 10.200px;
}
.has-launcher { padding-right: 16px; }
.launcher { position: absolute; right: 3px; top: 4px; }

.clip-body { padding-left: 9px; }
.paste {
  width: 28px;
  display: flex;
  flex-direction: column;
  align-items: center;
  padding-top: 6px;
}
.paste span { margin-top: 1px; line-height: 14px; }
.paste svg:last-child { margin-top: 2px; }
.clip-list {
  margin-left: 9px;
  padding-top: 3px;
  display: flex;
  flex-direction: column;
  font-size: 10px;
}
.clip-list li {
  height: 20px;
  display: flex;
  align-items: center;
  gap: 3px;
  white-space: nowrap;
  color: #444a52;
}
.clip-list li.muted { color: #a2a6ad; }
.clip-list li svg { width: 15px; }

.font-body { flex-direction: column; padding: 9px 0 0 6px; }
.para-body { flex-direction: column; padding: 9px 0 0 5px; }
.tool-row {
  display: flex;
  align-items: center;
  height: 20px;
}
.row-two { margin-top: 6px; }
.combo {
  height: 19px;
  border: 1px solid #c6cbd3;
  background: #fff;
  box-sizing: border-box;
  display: flex;
  align-items: center;
  padding-left: 3px;
  font-size: 10.300px;
  color: #444;
  position: relative;
  white-space: nowrap;
}
.combo-font { width: 90px; }
.combo-size { width: 40px; margin-left: -1px; }
.caret {
  display: block;
  width: 0;
  height: 0;
  border: 3px solid transparent;
  border-top: 4px solid #666;
  border-bottom: 0;
  margin-left: 3px;
  flex: none;
}
.combo .caret { position: absolute; right: 4px; top: 7px; }
.caret-faint { border-top-color: #aaa; }
.caret-inline { display: inline-block; vertical-align: 2px; margin-left: 1px; }
.tool {
  height: 20px;
  display: flex;
  align-items: center;
  justify-content: center;
  flex: none;
  box-sizing: border-box;
}
.w20 { width: 20px; }
.w22 { width: 22px; }
.w28 { width: 28px; }
.w30 { width: 30px; }
.w32 { width: 32px; }
.mg-l1 { margin-left: 5px; }
.sep { width: 1px; height: 20px; background: #d5d9e0; margin: 0 4px; flex: none; }
.sep-tight { margin: 0 3px 0 2px; }
.sep-wide { margin: 0 5px 0 6px; }
.aa { font: 700 13px "Liberation Serif", serif; color: #333; }
.fmt { font: 700 11px "Liberation Serif", serif; color: #333; }
.fmt sub, .fmt sup { font-size: 7px; line-height: 0; }
.fmt-i { font-style: italic; }
.fmt-s { font-size: 10px; }
.fx-a { font: 700 17px "Liberation Sans", sans-serif; color: #dcdfe4; -webkit-text-stroke: .6px #b6bac2; }
.pilcrow { font: 700 15px "Liberation Sans", sans-serif; color: #444; }
.tool-on {
  background: linear-gradient(#fde9a8, #fbcf6a);
  border: 1px solid #d7a63c;
  border-radius: 3px;
  height: 22px;
}
.mini-a { font: 700 7px "Liberation Sans", sans-serif; fill: #3a6db0; }
.mini-ab { font: 700 9px "Liberation Sans", sans-serif; fill: #333; }
.mini-az { font: 700 8px "Liberation Sans", sans-serif; fill: #2d6fc0; }
.mini-za { font: 700 8px "Liberation Sans", sans-serif; fill: #c0392b; }
.mini-rp { font: 400 8px "Liberation Sans", sans-serif; fill: #555; }
.mini-rp2 { font-weight: 700; }

.styles-body { padding: 5px 0 0 6px; }
.gallery {
  width: 883px;
  height: 56px;
  display: flex;
  border: 1px solid #c3c8d0;
  box-sizing: border-box;
  background: #fff;
  border-radius: 2px;
}
.style-list { flex: 1; display: flex; }
.style-item {
  width: 66.700px;
  flex: none;
  height: 54px;
  display: flex;
  flex-direction: column;
  align-items: center;
  box-sizing: border-box;
  overflow: hidden;
  padding: 0 3px;
}
.style-on { border: 2px solid #ecc469; border-radius: 2px; box-shadow: inset 0 0 0 1px #fdf3d4; }
.sample {
  display: block;
  height: 32px;
  max-width: 55px;
  overflow: hidden;
  font: 400 11.700px/38px "Liberation Sans", sans-serif;
  color: #111;
  white-space: nowrap;
}
.style-on .sample { line-height: 36px; }
.s-ital { font-style: italic; }
.s-big { font-size: 18px; line-height: 36px; max-width: 60px; }
.s-h1 { font: 700 15px/38px "Liberation Serif", serif; color: #2d5d97; }
.s-h2 { font: 700 14px/38px "Liberation Serif", serif; color: #4f81bd; }
.s-title { font: 400 30px/32px "Liberation Serif", serif; color: #1f3864; max-width: 54px; }
.s-sub { font-style: italic; color: #6c8fbf; letter-spacing: 1px; font-size: 11.500px; }
.s-subtle { font-style: italic; color: #808080; }
.s-intense { font-style: italic; color: #4f81bd; }
.s-strong { font-weight: 700; }
.style-name { font-size: 10px; line-height: 14px; color: #454a52; white-space: nowrap; margin-top: 1px; }
.style-on .style-name { margin-top: -1px; }
.gallery-arrows {
  width: 13px;
  flex: none;
  display: flex;
  flex-direction: column;
  border-left: 1px solid #c3c8d0;
}
.gallery-arrows span {
  flex: 1;
  display: flex;
  align-items: center;
  justify-content: center;
  border-bottom: 1px solid #d5d9e0;
}
.gallery-arrows span:last-child { border-bottom: 0; }
.big-tool {
  display: flex;
  flex-direction: column;
  align-items: center;
  line-height: 12.500px;
  white-space: nowrap;
}
.change-styles { width: 46px; }
.change-styles svg { margin-bottom: 3px; }
.edit-list { margin-left: 5px; padding-top: 2px; }
.edit-list li { gap: 3px; }
.acrobat-body { padding: 5px 0 0 4px; }
.acro-tool { width: 86px; }
.acro-tool:last-child { width: 56px; }
.acro-tool svg { margin-bottom: 3px; }
.ext-slot { flex: 1; }
.ext-tab {
  height: 46px;
  margin-top: -3px;
  background: #a8a8a8;
  border-radius: 4px 0 0 4px;
  display: flex;
  flex-direction: column;
  align-items: center;
  padding-top: 6px;
  box-sizing: border-box;
  gap: 4px;
  position: relative;
}

/* ruler */
.ruler {
  height: 25px;
  flex: none;
  display: flex;
  background: repeating-linear-gradient(90deg, #777 0 1px, transparent 1px 100px) 244px 22px / 100% 2px no-repeat #ccd1d9;
}
.ruler-corner { width: 43px; flex: none; padding: 5px 0 0 4px; box-sizing: border-box; }
.ruler-corner span {
  display: block;
  width: 18px;
  height: 17px;
  border: 1px solid #9aa0a8;
  box-sizing: border-box;
  background: linear-gradient(135deg, #f6f7f9, #d6dae0);
}
.ruler-corner span::after {
  content: "";
  display: block;
  width: 4px;
  height: 4px;
  margin: 5px 0 0 5px;
  border-left: 2px solid #333;
  border-bottom: 2px solid #333;
}
.ruler-strip {
  width: 1638px;
  height: 13px;
  margin-top: 8px;
  display: flex;
  flex: none;
  font-size: 10px;
  line-height: 13px;
  color: #4d5158;
  text-align: center;
}
.ruler-margin {
  width: 100px;
  flex: none;
  background-color: #d4d8de;
  background-image:
    repeating-linear-gradient(90deg, #777 0 1px, transparent 1px 78.700px),
    repeating-linear-gradient(90deg, #888 0 1px, transparent 1px 39.350px);
  background-size: 100% 5px, 100% 2px;
  background-position: 60.650px center, 1.300px center;
  background-repeat: no-repeat;
  border: 1px solid #b4b9c0;
  border-right: 0;
  box-sizing: border-box;
  padding-left: 14px;
  text-align: left;
  line-height: 11px;
}
.ruler-body {
  width: 1455px;
  flex: none;
  display: flex;
  position: relative;
  padding-left: 39.350px;
  box-sizing: border-box;
  background-color: #fafafa;
  background-image:
    repeating-linear-gradient(90deg, #777 0 1px, transparent 1px 78.700px),
    repeating-linear-gradient(90deg, #888 0 1px, transparent 1px 39.350px);
  background-size: 100% 5px, 100% 2px;
  background-position: 39.350px center, 19.700px center;
  background-repeat: no-repeat;
  border-top: 1px solid #b4b9c0;
  border-bottom: 1px solid #b4b9c0;
  line-height: 11px;
}
.ruler-body span { width: 78.700px; flex: none; }
.indent-mark { position: absolute; left: -4px; top: -3px; }
.right-mark { position: absolute; right: -5px; top: 5px; }
.ruler-tail {
  flex: 1;
  padding-left: 37px;
  text-align: left;
  box-sizing: border-box;
  background-image:
    repeating-linear-gradient(90deg, #777 0 1px, transparent 1px 78.700px),
    repeating-linear-gradient(90deg, #888 0 1px, transparent 1px 39.350px);
  background-size: 100% 5px, 100% 2px;
  background-position: 0 center, 19.700px center;
  background-repeat: no-repeat;
}
.ruler-view { margin-left: auto; width: 16px; padding-top: 9px; }

/* document */
.docarea {
  flex: 1;
  min-height: 0;
  display: flex;
  background: linear-gradient(#cdd2da, #c3c7cf 50%, #bcbec3);
}
.gutter { width: 65px; flex: none; }
.gutter-right { width: 43px; }
.page {
  width: 1656px;
  flex: none;
  background: #fff;
  box-shadow: 0 0 9px rgba(60,60,60,.55);
  font-size: 34px;
  color: #111;
  overflow: hidden;
}
.line {
  height: 47.550px;
  line-height: 47.550px;
  white-space: pre;
}
.line-first { margin-top: -2px; }
.line-short { height: 40px; line-height: 33px; }
.ind-0 { padding-left: 101px; }
.ind-1 { padding-left: 179px; }
.ind-2 { padding-left: 200px; }
.ind-3 { padding-left: 300px; }
.ind-4 { padding-left: 500px; }
.loose { letter-spacing: .12px; }
.tight { letter-spacing: -.07px; }
.tighter { letter-spacing: -.12px; }
.sq { text-decoration: underline wavy #e23b3b 1px; text-underline-offset: 3px; }
.gsq { text-decoration: underline wavy #2c9a3c 1px; text-underline-offset: 3px; }
.note { color: #00b050; font-size: 29.200px; }
.note-a { margin-left: 18px; letter-spacing: -.1px; }
.note-b { margin-left: 105px; }
.note-c { font-size: 30px; }
.red { color: #f00; }
.ord { font-size: 20px; line-height: 0; }
.blank { letter-spacing: -.3px; }

.vscroll {
  width: 16px;
  flex: none;
  background: #dfe3ea;
  display: flex;
  flex-direction: column;
  align-items: center;
  gap: 3px;
  overflow: hidden;
}
.vs-up { margin-top: 4px; }
.vs-track { flex: 1; width: 100%; padding-top: 365px; box-sizing: border-box; }
.vs-thumb {
  height: 56px;
  width: 15px;
  background: linear-gradient(90deg, #fdfdfe, #e7eaf0);
  border: 1px solid #9aa0aa;
  box-sizing: border-box;
  display: flex;
  align-items: center;
  justify-content: center;
}
.vs-thumb i {
  width: 7px;
  height: 7px;
  border-top: 1px solid #777;
  border-bottom: 1px solid #777;
  background: linear-gradient(#777, #777) center / 100% 1px no-repeat;
}
.vs-prev { margin-top: 5px; }
.vs-oval { margin-top: 7px; }
.vs-next { margin-top: 5px; }

.view-btn {
  position: absolute;
  left: 1841px;
  top: 8px;
  width: 69px;
  height: 33px;
  border-radius: 7px;
  background: rgba(44,44,44,.46);
  color: #c8c8c8;
  font-size: 14.500px;
  display: flex;
  align-items: center;
  gap: 6px;
  padding-left: 9px;
  box-sizing: border-box;
}
.annotate {
  position: absolute;
  left: 75px;
  top: 498px;
  width: 62px;
  height: 437px;
  box-sizing: border-box;
  border: 4px solid #a6a6aa;
  border-bottom-width: 3px;
  border-radius: 12px;
  background: #5a5a5a;
  display: flex;
  flex-direction: column;
  align-items: center;
  padding-top: 3px;
}
.annot-slot {
  height: 47.300px;
  flex: none;
  width: 100%;
  display: flex;
  align-items: center;
  justify-content: center;
  position: relative;
}
.has-tri::after {
  content: "";
  position: absolute;
  left: 38px;
  top: 34px;
  border: 3.500px solid transparent;
  border-left: 4px solid #111;
  border-right: 0;
}
.annot-pointer {
  width: 37px;
  height: 37px;
  border-radius: 50%;
  background: radial-gradient(#f8f8f8 30%, #c4c4c4);
  display: flex;
  align-items: center;
  justify-content: center;
}
.ibeam { position: absolute; left: 1037px; top: 489px; }

/* meeting toolbar */
.meeting-bar {
  height: 66px;
  flex: none;
  display: flex;
  align-items: flex-start;
  background: #1a1a1a;
  color: #a4a4a4;
  font-size: 14.500px;
}
.mb-item {
  display: flex;
  flex-direction: column;
  align-items: center;
  flex: none;
  line-height: 20px;
}
.mb-icon {
  height: 42px;
  display: flex;
  align-items: center;
  align-self: stretch;
}
.chev { margin-left: 10px; }
.mb-unmute { width: 114px; }
.mb-unmute .mb-icon { padding-left: 42px; }
.mb-unmute .chev { margin-left: 20px; }
.mb-video { width: 120px; }
.mb-video .mb-icon { padding-left: 44px; }
.mb-video .chev { margin-left: 25px; }
.mb-people { width: 100px; margin-left: 619px; }
.mb-people .mb-icon { padding-left: 34px; }
.mb-people .count { margin-left: 5px; font-size: 14px; }
.mb-people .chev { margin-left: 24px; }
.mb-chat { width: 100px; margin-left: 31px; }
.mb-chat .mb-icon { padding-left: 37px; position: relative; }
.badge {
  position: absolute;
  left: 55px;
  top: 4px;
  width: 26px;
  height: 19px;
  border-radius: 7px;
  background: #e8333b;
  color: #fff;
  font-size: 13px;
  line-height: 19px;
  text-align: center;
}
.mb-share { width: 110px; margin-left: 7px; color: #22d35a; }
.mb-share .mb-icon { padding-left: 40px; }
.leave {
  margin: 16px 15px 0 auto;
  width: 76px;
  height: 34px;
  border: 0;
  border-radius: 8px;
  background: #b32626;
  color: #fff;
  font: 700 14px "Open Sans", sans-serif;
  padding: 0;
}

/* windows taskbar */
.taskbar {
  height: 50px;
  flex: none;
  display: flex;
  align-items: center;
  background: linear-gradient(90deg, #cfe7ee, #d0e2ec 45%, #d4deec);
}
.start { width: 61px; flex: none; display: flex; justify-content: center; }
.search {
  width: 428px;
  height: 49px;
  margin-top: 1px;
  flex: none;
  background: #fff;
  display: flex;
  align-items: center;
  gap: 14px;
  padding: 0 0 2px 13px;
  box-sizing: border-box;
  font-size: 18px;
  color: #2b2b2b;
}
.task-icons { display: flex; height: 50px; }
.task {
  width: 61.900px;
  height: 50px;
  display: flex;
  align-items: center;
  justify-content: center;
  box-sizing: border-box;
}
.task-on { background: linear-gradient(#0b78d4, #0b78d4) center bottom / 51px 3px no-repeat; }
.task-active { background: linear-gradient(#0b78d4, #0b78d4) center bottom / 100% 3px no-repeat #eef3f8; }
.tray { margin-left: auto; display: flex; align-items: center; padding-right: 13px; height: 50px; }
.tray-en { width: 40px; text-align: center; color: #fff; font-size: 12.500px; }
.tray-ic { width: 30px; display: flex; justify-content: center; }
.tray-vol { width: 26px; }
.clock {
  width: 92px;
  display: flex;
  flex-direction: column;
  align-items: center;
  font-size: 14px;
  line-height: 23px;
  color: #222;
}
.notify { width: 50px; display: flex; justify-content: center; position: relative; }
.notify b {
  position: absolute;
  left: 29px;
  top: 8px;
  width: 17px;
  height: 17px;
  border: 1px solid #555;
  border-radius: 50%;
  box-sizing: border-box;
  background: #d4deec;
  font-size: 12px;
  font-weight: 400;
  line-height: 15px;
  text-align: center;
  color: #222;
}
```
